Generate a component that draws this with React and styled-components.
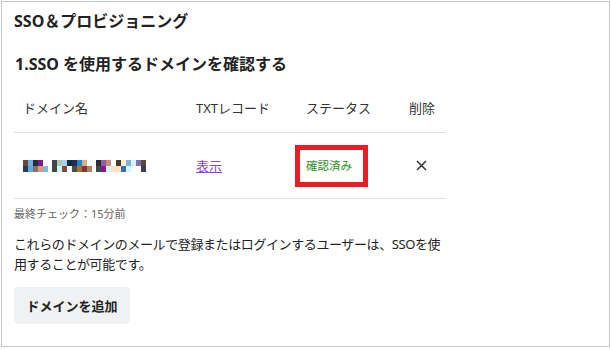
import React from 'react';
import styled, { createGlobalStyle } from 'styled-components';

const GlobalStyle = createGlobalStyle`
  html, body {
    margin: 0;
    padding: 0;
    background: #ffffff;
  }
  body {
    font-family: "Noto Sans", "Noto Sans CJK JP", sans-serif;
    color: #222222;
  }
`;

const Frame = styled.div`
  box-sizing: border-box;
  width: 609px;
  height: 346px;
  margin: 1px 0 0 1px;
  border: 1px solid #c6c6c6;
  padding: 7px 12px 0 12px;
`;

const Content = styled.div`
  width: 432px;
`;

const Title = styled.h1`
  margin: 0;
  font-size: 16px;
  line-height: 24px;
  font-weight: 700;
  color: #222222;
`;

const Heading = styled.h2`
  margin: 19px 0 0 1px;
  font-size: 16px;
  line-height: 24px;
  font-weight: 700;
  color: #222222;
`;

const Table = styled.div`
  margin-top: 13px;
  display: grid;
  grid-template-columns: 173px 110px 103px 1fr;
`;

const HeadCell = styled.div`
  padding: 9px 9px 14px 9px;
  font-size: 13px;
  line-height: 20px;
  color: #333333;
  border-bottom: 1px solid #e0e0e0;
`;

const Cell = styled.div`
  height: 65px;
  display: flex;
  align-items: center;
  padding: 0 9px;
  border-bottom: 1px solid #e0e0e0;
  font-size: 13px;
`;

const Masked = styled.div`
  display: flex;
  gap: 4px;
  margin-top: 1px;
`;

const MaskGroup = styled.div`
  display: grid;
  grid-template-columns: repeat(${(p) => p.$cols}, 5px);
  grid-auto-rows: 6px;
`;

const MaskPixel = styled.span`
  background: ${(p) => p.$c};
`;

const ViewLink = styled.a`
  color: #8b45d9;
  text-decoration: underline;
  font-size: 13px;
  line-height: 20px;
  cursor: pointer;
`;

const Highlight = styled.span`
  margin-left: -11px;
  border: 5px solid #ea1c24;
  padding: 6px 11px 6px 6px;
  display: inline-flex;
  align-items: center;
`;

const Status = styled.span`
  color: #2a8f2a;
  font-size: 11.5px;
  line-height: 20px;
  font-weight: 400;
`;

const DeleteButton = styled.button`
  border: 0;
  background: none;
  padding: 0;
  margin-left: 7px;
  display: flex;
  color: #333333;
  cursor: pointer;
`;

const Checked = styled.div`
  margin-top: 7px;
  font-size: 11px;
  line-height: 16px;
  color: #666666;
`;

const Note = styled.p`
  margin: 12px 0 0 0;
  font-size: 13px;
  line-height: 20px;
  letter-spacing: -0.4px;
  color: #222222;
`;

const AddButton = styled.button`
  margin-top: 13px;
  width: 116px;
  height: 37px;
  border: 0;
  border-radius: 4px;
  background: #f0f1f3;
  font-family: "Noto Sans", "Noto Sans CJK JP", sans-serif;
  font-size: 13px;
  font-weight: 700;
  color: #222222;
  cursor: pointer;
`;

const maskGroups = [
  {
    cols: 5,
    rows: [
      ['#6b4a3a', '#6ab0e0', '#2a2a3a', '#7b1a8a', '#ffffff'],
      ['#2b3a55', '#5fa8e0', '#8a7060', '#d0a070', '#80b8e0'],
    ],
  },
  {
    cols: 8,
    rows: [
      ['#3f4848', '#a8c8b8', '#a0d0f8', '#1a2a3e', '#1a3050', '#1a88d0', '#d8b088', '#ffffff'],
      ['#3f4848', '#d0f4fc', '#8a4a30', '#f0fcfc', '#4a4e48', '#b86a30', '#7a3a38', '#b88060'],
    ],
  },
  {
    cols: 10,
    rows: [
      ['#2a2a40', '#9a5aa0', '#c89070', '#ffffff', '#4a3a2e', '#f8ecd0', '#80b0d8', '#d0f4f8', '#7a70b0', '#5a4a3a'],
      ['#404848', '#8a1a8a', '#c8f8f8', '#fce0c0', '#fce0c0', '#3a70a0', '#d0f8f8', '#f8fcfc', '#ffffff', '#3a3e4a'],
    ],
  },
];

const CloseIcon = () => (
  <svg width="11" height="11" viewBox="0 0 11 11">
    <path d="M1 1 L10 10 M10 1 L1 10" stroke="#333" strokeWidth="1.5" fill="none" />
  </svg>
);

export default function App() {
  return (
    <>
      <GlobalStyle />
      <Frame>
        <Content>
          <Title>SSO＆プロビジョニング</Title>
          <Heading>1.SSO を使用するドメインを確認する</Heading>
          <Table>
            <HeadCell>ドメイン名</HeadCell>
            <HeadCell>TXTレコード</HeadCell>
            <HeadCell>ステータス</HeadCell>
            <HeadCell>削除</HeadCell>

            <Cell>
              <Masked>
                {maskGroups.map((g, gi) => (
                  <MaskGroup key={gi} $cols={g.cols}>
                    {g.rows.flat().map((c, i) => <MaskPixel key={i} $c={c} />)}
                  </MaskGroup>
                ))}
              </Masked>
            </Cell>
            <Cell>
              <ViewLink>表示</ViewLink>
            </Cell>
            <Cell>
              <Highlight>
                <Status>確認済み</Status>
              </Highlight>
            </Cell>
            <Cell>
              <DeleteButton aria-label="削除"><CloseIcon /></DeleteButton>
            </Cell>
          </Table>
          <Checked>最終チェック：15分前</Checked>
          <Note>これらのドメインのメールで登録またはログインするユーザーは、SSOを使用することが可能です。</Note>
          <AddButton>ドメインを追加</AddButton>
        </Content>
      </Frame>
    </>
  );
}
